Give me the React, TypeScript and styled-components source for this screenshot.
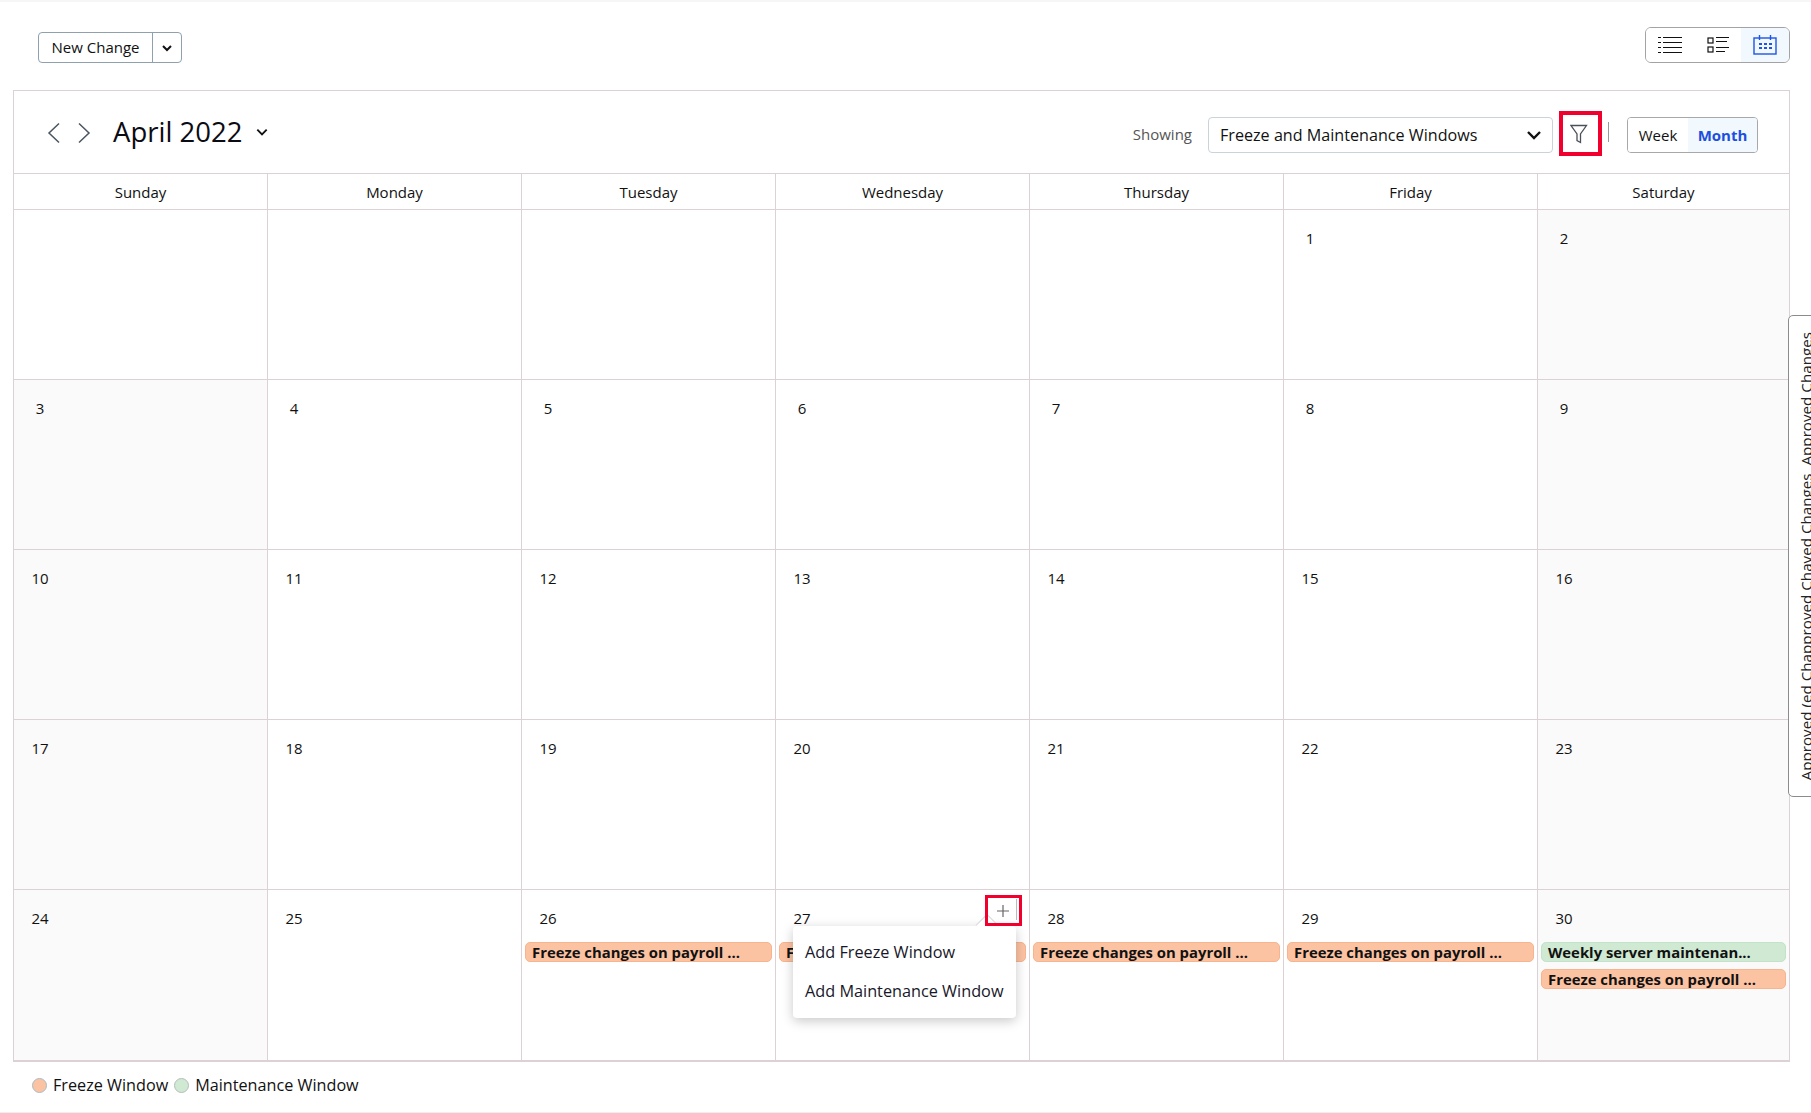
import React from "react";
import styled, { createGlobalStyle } from "styled-components";

const Global = createGlobalStyle`
  html, body { margin: 0; padding: 0; background: #fff; }
  body { font-family: "Open Sans", "Noto Sans", sans-serif; color: #111; }
  * { box-sizing: border-box; }
`;

const Page = styled.div`
  position: relative;
  width: 1811px;
  height: 1113px;
  overflow: hidden;
  background: #fff;
  border-top: 2px solid #f6f6f6;
  border-bottom: 1px solid #eee;
  padding: 25px 21px 0 13px;
`;

const TopBar = styled.div`
  height: 63px;
  display: flex;
  align-items: flex-start;
  justify-content: space-between;
  padding-left: 25px;
`;

const SplitButton = styled.div`
  margin-top: 5px;
  display: flex;
  height: 31px;
  border: 1px solid #8fa1ac;
  border-radius: 4px;
`;

const SplitMain = styled.div`
  width: 114px;
  display: flex;
  align-items: center;
  justify-content: center;
  padding-bottom: 2px;
  font-size: 15px;
  border-right: 1px solid #8fa1ac;
`;

const SplitCaret = styled.div`
  width: 28px;
  display: flex;
  align-items: center;
  justify-content: center;
`;

const ViewSwitch = styled.div`
  display: flex;
  height: 36px;
  border: 1px solid #a3a3a3;
  border-radius: 6px;
  overflow: hidden;
`;

const ViewCell = styled.div<{ $on?: boolean }>`
  width: 47.6px;
  display: flex;
  align-items: center;
  justify-content: center;
  background: ${(p) => (p.$on ? "#f1f9ff" : "#fff")};
`;

const Calendar = styled.div`
  width: 1777px;
  border: 1px solid #dcd2d6;
  border-bottom-width: 2px;
`;

const Header = styled.div`
  height: 83px;
  display: flex;
  align-items: center;
  justify-content: space-between;
  padding: 0 31px 0 33px;
  border-bottom: 1px solid #dcd2d6;
`;

const TitleGroup = styled.div`
  display: flex;
  align-items: center;
`;

const NavIcon = styled.svg`
  width: 14px;
  height: 22px;
  margin-right: 16px;
  margin-top: 2px;
  color: #4a5560;
`;

const Title = styled.div`
  font-size: 27.5px;
  line-height: 36px;
  margin-left: 6px;
  margin-right: 13px;
  color: #0b0b14;
`;

const Tools = styled.div`
  display: flex;
  align-items: center;
  margin-top: 6px;
`;

const ShowingLabel = styled.span`
  font-size: 15px;
  color: #555;
  margin-right: 16px;
  margin-top: -3px;
`;

const SelectBox = styled.div`
  width: 345px;
  height: 36px;
  border: 1px solid #c9d3da;
  border-radius: 4px;
  display: flex;
  align-items: center;
  justify-content: space-between;
  padding: 0 9px 0 11px;
  font-size: 16.15px;
`;

const FilterBox = styled.div`
  width: 43px;
  height: 45px;
  margin-left: 6px;
  margin-top: -3px;
  padding-right: 3px;
  border: 4px solid #f2002d;
  display: flex;
  align-items: center;
  justify-content: center;
`;

const Divider = styled.div`
  width: 1px;
  height: 20px;
  background: #999;
  margin: 0 18px 0 6px;
  position: relative;
  top: -3px;
`;

const Toggle = styled.div`
  display: flex;
  width: 131px;
  height: 36px;
  border: 1px solid #a8a8a8;
  border-radius: 4px;
  overflow: hidden;
  font-size: 15px;
`;

const ToggleCell = styled.div<{ $on?: boolean }>`
  display: flex;
  align-items: center;
  justify-content: center;
  width: ${(p) => (p.$on ? "69px" : "60px")};
  background: ${(p) => (p.$on ? "#f1f9ff" : "#fff")};
  color: ${(p) => (p.$on ? "#1c4fe0" : "#111")};
  font-weight: ${(p) => (p.$on ? 700 : 400)};
`;

const Weekdays = styled.div`
  display: grid;
  grid-template-columns: repeat(6, 254px) 1fr;
  height: 36px;
  border-bottom: 1px solid #dcd2d6;
`;

const Weekday = styled.div`
  display: flex;
  align-items: center;
  justify-content: center;
  padding-top: 1px;
  font-size: 15px;
  border-right: 1px solid #dcd2d6;
  &:last-child { border-right: 0; }
`;

const Grid = styled.div`
  display: grid;
  grid-template-columns: repeat(6, 254px) 1fr;
  grid-auto-rows: 170px;
`;

const Cell = styled.div<{ $shade?: boolean }>`
  position: relative;
  padding: 16px 3px 0 3px;
  background: ${(p) => (p.$shade ? "#fafafa" : "#fff")};
  border-right: 1px solid #dcd2d6;
  border-bottom: 1px solid #dcd2d6;
  &:nth-child(7n) { border-right: 0; }
  &:nth-last-child(-n + 7) { border-bottom: 0; }
`;

const DayNum = styled.div`
  width: 46px;
  height: 24px;
  line-height: 24px;
  text-align: center;
  font-size: 15px;
`;

const Events = styled.div`
  margin-top: 12px;
  display: flex;
  flex-direction: column;
  gap: 7px;
`;

const Event = styled.div<{ $kind: "freeze" | "maint" }>`
  height: 20px;
  line-height: 18px;
  border-radius: 5px;
  padding-left: 6px;
  font-size: 14.85px;
  font-weight: 700;
  white-space: nowrap;
  overflow: hidden;
  background: ${(p) => (p.$kind === "freeze" ? "#fcc3a3" : "#cfe9d3")};
  border: 1px solid ${(p) => (p.$kind === "freeze" ? "#f7b48e" : "#c4e2ca")};
`;

const PlusBox = styled.div`
  position: absolute;
  left: 985px;
  top: 893px;
  width: 37px;
  height: 31px;
  padding: 1px 2px 0 0;
  border: 3.5px solid #f2002d;
  display: flex;
  align-items: center;
  justify-content: center;
  z-index: 3;
`;

const Popover = styled.div`
  position: absolute;
  left: 793px;
  top: 924px;
  width: 223px;
  height: 92px;
  padding: 7px 12px;
  background: #fff;
  border-radius: 4px;
  box-shadow: 0 3px 12px rgba(0, 0, 0, 0.22);
  z-index: 2;
`;

const PopItem = styled.div`
  height: 39px;
  line-height: 39px;
  font-size: 16.25px;
  color: #171727;
  white-space: nowrap;
`;

const Legend = styled.div`
  display: flex;
  align-items: center;
  padding: 12px 0 0 19px;
  font-size: 16.2px;
`;

const Dot = styled.span<{ $c: string; $b: string }>`
  width: 15px;
  height: 15px;
  border-radius: 50%;
  background: ${(p) => p.$c};
  border: 1px solid ${(p) => p.$b};
  margin-right: 6px;
`;

const LegendText = styled.span`
  margin-right: 6px;
`;

const SideTab = styled.div`
  position: absolute;
  left: 1788px;
  top: 313px;
  width: 30px;
  height: 482px;
  border: 1px solid #8c8c8c;
  border-radius: 5px 0 0 5px;
  background: #fff;
  overflow: hidden;
`;

const SideText = styled.div`
  position: absolute;
  left: 7px;
  bottom: 16px;
  writing-mode: vertical-rl;
  transform: rotate(180deg);
  font-size: 15.2px;
  line-height: 20px;
  white-space: pre;
  color: #222;
`;

const Chevron = ({ size = 12, w = 2 }: { size?: number; w?: number }) => (
  <svg width={size} height={size} viewBox="0 0 12 12" fill="none" stroke="currentColor" strokeWidth={w}>
    <path d="M2 4l4 4 4-4" />
  </svg>
);

const ListIcon = () => (
  <svg width="24" height="18" viewBox="0 0 24 18" stroke="#111" strokeWidth="1.2">
    <path d="M0 1.5h3M5 1.5h19M0 6.5h3M5 6.5h19M0 11.5h3M5 11.5h19M0 16.5h3M5 16.5h19" />
  </svg>
);

const DetailIcon = () => (
  <svg width="22" height="18" viewBox="0 0 22 18" fill="none" stroke="#111" strokeWidth="1.2">
    <rect x="1" y="2" width="5" height="5" />
    <rect x="1" y="11" width="5" height="5" />
    <path d="M9 1.5h13M9 5.5h11M9 11.5h13M9 15.5h9" />
  </svg>
);

const CalIcon = () => (
  <svg width="24" height="20" viewBox="0 0 24 20" fill="none" stroke="#1c55e8" strokeWidth="1.4">
    <rect x="1" y="3" width="22" height="16" />
    <path d="M6.5 0v5M17.5 0v5" />
    <path d="M6 9h3M11 9h3M16 9h3M6 13h3M11 13h3M16 13h3" strokeWidth="2" />
  </svg>
);

const FunnelIcon = () => (
  <svg width="18" height="20" viewBox="0 0 18 20" fill="none" stroke="#4a5058" strokeWidth="1.3">
    <path d="M1 1.5h15.5L10.5 10v8.5l-3.5-2V10z" />
  </svg>
);

const PlusIcon = () => (
  <svg width="14" height="14" viewBox="0 0 14 14" stroke="#666" strokeWidth="1.2">
    <path d="M7 1v12M1 7h12" />
  </svg>
);

const PlusLine = styled.span`
  position: absolute;
  right: 2px;
  top: 1px;
  bottom: 3px;
  width: 1px;
  background: #bbb;
`;

const Notch = styled.span`
  position: absolute;
  left: 186px;
  top: -9px;
  width: 16px;
  height: 16px;
  background: #fff;
  transform: rotate(45deg);
  border-top: 1px solid #d8d8d8;
  border-left: 1px solid #d8d8d8;
`;

type Ev = { kind: "freeze" | "maint"; text: string };
const FREEZE: Ev = { kind: "freeze", text: "Freeze changes on payroll ..." };
const eventsFor: Record<number, Ev[]> = {
  26: [FREEZE],
  27: [FREEZE],
  28: [FREEZE],
  29: [FREEZE],
  30: [{ kind: "maint", text: "Weekly server maintenan..." }, FREEZE],
};

const days: (number | null)[] = [null, null, null, null, null, ...Array.from({ length: 30 }, (_, i) => i + 1)];
const weekdays = ["Sunday", "Monday", "Tuesday", "Wednesday", "Thursday", "Friday", "Saturday"];

export default function App() {
  return (
    <Page>
      <Global />
      <TopBar>
        <SplitButton>
          <SplitMain>New Change</SplitMain>
          <SplitCaret>
            <Chevron />
          </SplitCaret>
        </SplitButton>
        <ViewSwitch>
          <ViewCell><ListIcon /></ViewCell>
          <ViewCell><DetailIcon /></ViewCell>
          <ViewCell $on><CalIcon /></ViewCell>
        </ViewSwitch>
      </TopBar>
      <Calendar>
        <Header>
          <TitleGroup>
            <NavIcon viewBox="0 0 14 22" fill="none" stroke="currentColor" strokeWidth="1.5">
              <path d="M12 1.5L2 11l10 9.5" />
            </NavIcon>
            <NavIcon viewBox="0 0 14 22" fill="none" stroke="currentColor" strokeWidth="1.5">
              <path d="M2 1.5L12 11 2 20.5" />
            </NavIcon>
            <Title>April 2022</Title>
            <Chevron size={14} w={1.6} />
          </TitleGroup>
          <Tools>
            <ShowingLabel>Showing</ShowingLabel>
            <SelectBox>
              Freeze and Maintenance Windows
              <Chevron size={18} w={1.6} />
            </SelectBox>
            <FilterBox><FunnelIcon /></FilterBox>
            <Divider />
            <Toggle>
              <ToggleCell>Week</ToggleCell>
              <ToggleCell $on>Month</ToggleCell>
            </Toggle>
          </Tools>
        </Header>
        <Weekdays>
          {weekdays.map((d) => <Weekday key={d}>{d}</Weekday>)}
        </Weekdays>
        <Grid>
          {days.map((d, i) => (
            <Cell key={i} $shade={d !== null && (i % 7 === 0 || i % 7 === 6)}>
              <DayNum>{d}</DayNum>
              {d !== null && eventsFor[d] && (
                <Events>
                  {eventsFor[d].map((e, k) => <Event key={k} $kind={e.kind}>{e.text}</Event>)}
                </Events>
              )}
            </Cell>
          ))}
        </Grid>
      </Calendar>
      <Legend>
        <Dot $c="#fcc3a3" $b="#a9bcc6" />
        <LegendText>Freeze Window</LegendText>
        <Dot $c="#cfe9d3" $b="#b7bdb9" />
        <LegendText>Maintenance Window</LegendText>
      </Legend>
      <PlusBox><PlusIcon /><PlusLine /></PlusBox>
      <Popover>
        <Notch />
        <PopItem>Add Freeze Window</PopItem>
        <PopItem>Add Maintenance Window</PopItem>
      </Popover>
      <SideTab>
        <SideText>Approved (ed Chapproved Chaved Changes  Approved Changes</SideText>
      </SideTab>
    </Page>
  );
}
